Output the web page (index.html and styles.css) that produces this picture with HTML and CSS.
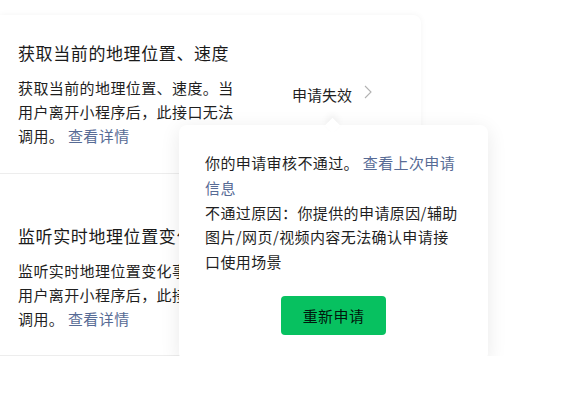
FILE: index.html
```html
<!DOCTYPE html>
<html lang="zh-CN">

<head>
  <meta charset="UTF-8">
  <title>接口权限</title>
  <link rel="stylesheet" href="styles.css">
</head>

<body>
  <div class="page">
    <div class="card">
      <div class="api-row api-row-first">
        <div class="api-info">
          <h3 class="api-title">获取当前的地理位置、速度</h3>
          <p class="api-desc">获取当前的地理位置、速度。当用户离开小程序后，此接口无法调用。 <a class="link" href="#">查看详情</a></p>
        </div>
        <div class="api-status">
          <span>申请失效</span>
          <svg class="chevron" width="8" height="14" viewBox="0 0 8 14">
            <polyline points="1,1 7,7 1,13" fill="none" stroke="#b2b2b2" stroke-width="1.1" />
          </svg>
        </div>
      </div>

      <div class="api-row api-row-second">
        <div class="api-info">
          <h3 class="api-title">监听实时地理位置变化</h3>
          <p class="api-desc">监听实时地理位置变化事件。当用户离开小程序后，此接口无法调用。 <a class="link" href="#">查看详情</a></p>
        </div>
        <div class="api-status">
          <span>申请失效</span>
          <svg class="chevron" width="8" height="14" viewBox="0 0 8 14">
            <polyline points="1,1 7,7 1,13" fill="none" stroke="#b2b2b2" stroke-width="1.1" />
          </svg>
        </div>
      </div>
    </div>

    <div class="popover">
      <p>你的申请审核不通过。 <a class="link" href="#">查看上次申请信息</a></p>
      <p>不通过原因：你提供的申请原因/辅助图片/网页/视频内容无法确认申请接口使用场景</p>
      <div class="popover-actions">
        <button class="btn-primary">重新申请</button>
      </div>
    </div>
  </div>
</body>

</html>
```

FILE: styles.css
```css
body {
  margin: 0;
  background: #fff;
  font-family: "Noto Sans CJK SC", "Noto Sans", sans-serif;
  color: rgba(0, 0, 0, 0.9);
}

.page {
  position: relative;
  padding-top: 15px;
}

.card {
  width: 421px;
  background: #fff;
  border-radius: 0 8px 0 0;
  box-shadow: 0 0 6px rgba(0, 0, 0, 0.05);
}

.api-row {
  display: flex;
  align-items: center;
  justify-content: space-between;
  padding: 25px 49px 25px 18px;
  border-bottom: 1px solid #ededed;
}

.api-row-second {
  padding-top: 49px;
  padding-bottom: 24px;
}

.api-info {
  width: 222px;
}

.api-title {
  margin: 0;
  font-size: 17px;
  font-weight: normal;
  letter-spacing: 0.6px;
  line-height: 26px;
  color: #1a1a1a;
}

.api-desc {
  margin: 10px 0 0;
  font-size: 15px;
  letter-spacing: 0.4px;
  line-height: 24px;
  color: #1f1f1f;
}

.link {
  color: #576b95;
  text-decoration: none;
}

.api-status {
  display: flex;
  align-items: center;
  gap: 12px;
  font-size: 15px;
  color: #1f1f1f;
}

.chevron {
  margin-top: -4px;
}

/* 审核失败弹层 */
.popover {
  position: absolute;
  left: 179px;
  top: 125px;
  width: 254px;
  padding: 26px 29px 26px 26px;
  background: #fff;
  border-radius: 8px;
  box-shadow: 0 4px 20px rgba(0, 0, 0, 0.09);
  font-size: 15px;
  letter-spacing: 0.4px;
  line-height: 24.8px;
  color: #1f1f1f;
}

.popover::before {
  content: "";
  position: absolute;
  top: -5px;
  left: 148px;
  width: 11px;
  height: 11px;
  background: #fff;
  transform: rotate(45deg);
  box-shadow: -3px -3px 6px rgba(0, 0, 0, 0.05);
}

.popover p {
  margin: 0;
  position: relative;
}

.popover-actions {
  display: flex;
  justify-content: center;
  margin-top: 21px;
  margin-right: -3px;
}

.btn-primary {
  width: 105px;
  height: 39px;
  background: #07c160;
  color: rgba(0, 0, 0, 0.9);
  border: none;
  border-radius: 4px;
  font-family: inherit;
  font-size: 15px;
  letter-spacing: 0.4px;
  cursor: pointer;
}
```
